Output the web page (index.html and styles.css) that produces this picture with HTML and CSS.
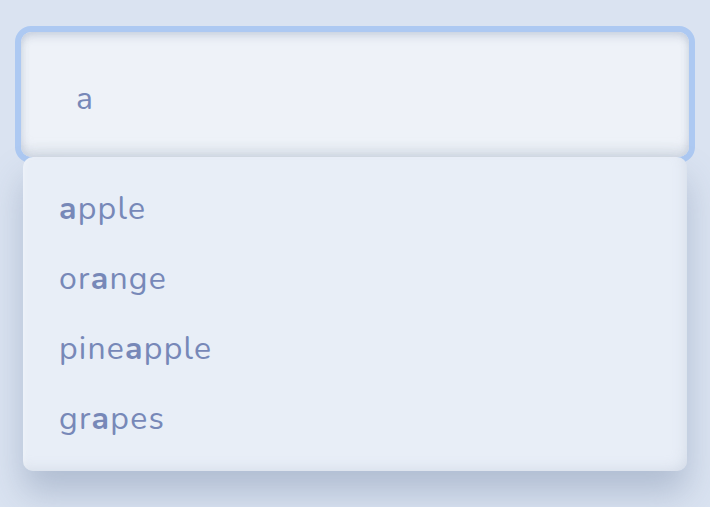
FILE: index.html
```html
<!DOCTYPE html>
<html>
<head>
<meta charset="utf-8">
<link rel="stylesheet" href="styles.css">
</head>
<body>
<div class="wrap">
  <div class="field">
    <input class="input" type="text" value="a">
  </div>
  <ul class="list">
    <li class="item"><b>a</b>pple</li>
    <li class="item">or<b>a</b>nge</li>
    <li class="item">pine<b>a</b>pple</li>
    <li class="item">gr<b>a</b>pes</li>
  </ul>
</div>
</body>
</html>
```
FILE: styles.css
```css
html, body {
  margin: 0;
  height: 100%;
  background: #dae3f1;
}
body {
  font-family: "Nunito", "Lato", "Open Sans", sans-serif;
  color: #7788b8;
}
.wrap {
  padding: 26px 15px 0;
}
.field {
  border: 6px solid #adc9f2;
  border-radius: 16px;
  height: 125px;
  box-sizing: content-box;
  overflow: hidden;
}
.input {
  display: block;
  width: 100%;
  height: 100%;
  box-sizing: border-box;
  border: 0;
  outline: 0;
  margin: 0;
  padding: 8px 0 0 55px;
  font: inherit;
  font-size: 32px;
  letter-spacing: 1.2px;
  color: #7788b8;
  background: #eef2f8;
  border-radius: 10px;
  box-shadow: inset 0 6px 8px -2px rgba(160, 172, 195, 0.45), inset 0 -12px 12px -6px rgba(190, 198, 212, 0.55), inset 6px 0 10px -6px rgba(190, 200, 220, 0.4), inset -6px 0 10px -6px rgba(190, 200, 220, 0.4);
}
.list {
  list-style: none;
  margin: -6px 8px 0;
  padding: 17px 0;
  background: #e8eef7;
  border-radius: 10px;
  box-shadow: inset -6px -6px 14px -6px rgba(200, 208, 222, 0.7), inset 4px 0 8px -6px rgba(255, 255, 255, 0.8), 0 22px 34px rgba(110, 130, 160, 0.38);
  position: relative;
}
.item {
  height: 70px;
  line-height: 70px;
  padding: 0 36px;
  font-size: 32px;
  letter-spacing: 1.2px;
}
.item b {
  font-weight: 700;
}
```
